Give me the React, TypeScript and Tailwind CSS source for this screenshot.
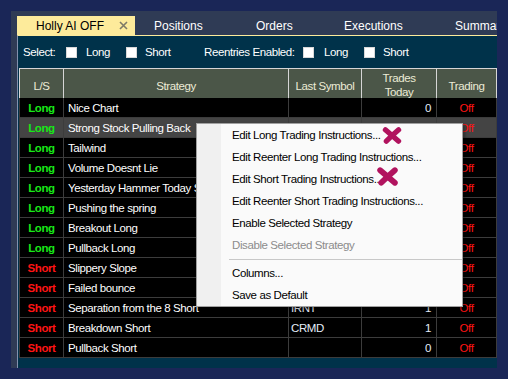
import React from "react";

type Row = { ls: "Long" | "Short"; name: string; sym: string; trades: string; sel?: boolean };

const rows: Row[] = [
  { ls: "Long", name: "Nice Chart", sym: "", trades: "0" },
  { ls: "Long", name: "Strong Stock Pulling Back", sym: "", trades: "0", sel: true },
  { ls: "Long", name: "Tailwind", sym: "", trades: "0" },
  { ls: "Long", name: "Volume Doesnt Lie", sym: "", trades: "0" },
  { ls: "Long", name: "Yesterday Hammer Today Strong", sym: "", trades: "0" },
  { ls: "Long", name: "Pushing the spring", sym: "", trades: "0" },
  { ls: "Long", name: "Breakout Long", sym: "", trades: "0" },
  { ls: "Long", name: "Pullback Long", sym: "", trades: "0" },
  { ls: "Short", name: "Slippery Slope", sym: "", trades: "0" },
  { ls: "Short", name: "Failed bounce", sym: "", trades: "0" },
  { ls: "Short", name: "Separation from the 8 Short", sym: "IRNT", trades: "1" },
  { ls: "Short", name: "Breakdown Short", sym: "CRMD", trades: "1" },
  { ls: "Short", name: "Pullback Short", sym: "", trades: "0" },
];

const Check = () => <div className="w-[11px] h-[11px] bg-white border border-[#d8d8d8] shrink-0" />;

const PinkX = ({ w, h }: { w: number; h: number }) => (
  <svg width={w} height={h} viewBox="0 0 20 18" className="block">
    <path d="M3 3 Q10 9 17 15" stroke="#b1135e" strokeWidth="5.5" strokeLinecap="round" fill="none" />
    <path d="M17 3 Q10 9 4 15" stroke="#b1135e" strokeWidth="5.5" strokeLinecap="round" fill="none" />
  </svg>
);

export default function App() {
  const font = "font-['Liberation_Sans',Arial,sans-serif]";
  return (
    <div className={`w-[508px] h-[379px] bg-[#1a2657] relative overflow-hidden pt-[11px] pl-[11px] ${font}`}>
      <div className="w-[486px] h-[357px] bg-[#2f3b55] flex flex-col">
        {/* Tab bar */}
        <div className="h-[24px] flex items-end pl-[6px] shrink-0 overflow-hidden text-[12px] whitespace-nowrap">
          <div className="w-[118px] h-[19px] bg-[#fdeb9b] flex items-center pl-[19px] pr-[7px] text-black shrink-0">
            <span>Holly AI OFF</span>
            <svg width="9" height="9" viewBox="0 0 9 9" className="ml-auto">
              <path d="M1 1 L8 8 M8 1 L1 8" stroke="#7d7a68" strokeWidth="1.6" />
            </svg>
          </div>
          <div className="w-[102px] h-[19px] flex items-center pl-[19px] text-white shrink-0">Positions</div>
          <div className="w-[88px] h-[19px] flex items-center pl-[19px] text-white shrink-0">Orders</div>
          <div className="w-[111px] h-[19px] flex items-center pl-[19px] text-white shrink-0">Executions</div>
          <div className="w-[60px] h-[19px] flex items-center pl-[19px] text-white shrink-0">Summary</div>
        </div>
        {/* Body */}
        <div className="flex flex-1 min-h-0">
          <div className="w-[6px] shrink-0" />
          <div className="flex-1 bg-[#00324a] border-t border-t-[#fdeb9b] border-l border-l-[#8391ad] flex flex-col">
            {/* Select row */}
            <div className="h-[32px] flex items-center pl-[5px] pt-[1px] text-[11.5px] tracking-[-0.4px] text-white whitespace-nowrap shrink-0">
              <div className="w-[43px] shrink-0">Select:</div>
              <Check />
              <div className="w-[49px] pl-[9px] shrink-0">Long</div>
              <Check />
              <div className="w-[67px] pl-[8px] shrink-0">Short</div>
              <div className="w-[99px] shrink-0">Reentries Enabled:</div>
              <Check />
              <div className="w-[50px] pl-[10px] shrink-0">Long</div>
              <Check />
              <div className="pl-[8px] shrink-0">Short</div>
            </div>
            {/* Grid */}
            <div className="ml-[1px] text-[11.5px] tracking-[-0.4px] whitespace-nowrap">
              <div className="grid grid-cols-[44px_225px_73px_75px_61px] h-[30px] bg-[#4b5648] text-[#ecebd6] border-t border-t-[#d6d6d6] text-center leading-[14px]">
                <div className="border-l border-[#d6d6d6] flex items-center justify-center pt-[3px]">L/S</div>
                <div className="border-l border-[#d6d6d6] flex items-center justify-center pt-[3px]">Strategy</div>
                <div className="border-l border-[#d6d6d6] flex items-center justify-center pt-[3px]">Last Symbol</div>
                <div className="border-l border-[#d6d6d6] flex items-center justify-center pt-[2px]">
                  Trades
                  <br />
                  Today
                </div>
                <div className="border-l border-r border-[#d6d6d6] flex items-center justify-center pt-[3px]">Trading</div>
              </div>
              {rows.map((r, i) => (
                <div
                  key={i}
                  className={`grid grid-cols-[44px_225px_73px_75px_61px] h-[20px] ${r.sel ? "bg-[#444444]" : "bg-black"}`}
                >
                  <div
                    className={`border-l border-b border-[#3c3c3c] flex items-center justify-center pt-[2px] font-bold ${
                      r.ls === "Long" ? "text-[#18e818]" : "text-[#ff1414]"
                    }`}
                  >
                    {r.ls}
                  </div>
                  <div className="border-l border-b border-[#3c3c3c] flex items-center pl-[4px] pt-[2px] text-white overflow-hidden">
                    {r.name}
                  </div>
                  <div className="border-l border-b border-[#3c3c3c] flex items-center pl-[2px] pt-[2px] text-[#e4ecf8]">
                    {r.sym}
                  </div>
                  <div className="border-l border-b border-[#3c3c3c] flex items-center justify-end pr-[5px] pt-[2px] text-[#e4ecf8]">
                    {r.trades}
                  </div>
                  <div className="border-l border-r border-b border-[#3c3c3c] flex items-center justify-center pt-[2px] text-[#ff1414]">
                    Off
                  </div>
                </div>
              ))}
            </div>
          </div>
        </div>
      </div>

      {/* Context menu */}
      <div className="absolute left-[196px] top-[123px] w-[267px] h-[184px] bg-[#fafafa] border border-[#a0a0a0] flex text-[11.5px] tracking-[-0.4px] text-black whitespace-nowrap shadow-[2px_2px_3px_rgba(0,0,0,0.35)]">
        <div className="w-[24px] bg-[#f0f0f0] shrink-0" />
        <div className="flex-1 flex flex-col">
          <div className="h-[22px] flex items-center pl-[11px] pt-[1px]">Edit Long Trading Instructions...</div>
          <div className="h-[22px] flex items-center pl-[11px] pt-[1px]">Edit Reenter Long Trading Instructions...</div>
          <div className="h-[22px] flex items-center pl-[11px] pt-[1px]">Edit Short Trading Instructions...</div>
          <div className="h-[22px] flex items-center pl-[11px] pt-[1px]">Edit Reenter Short Trading Instructions...</div>
          <div className="h-[22px] flex items-center pl-[11px] pt-[1px]">Enable Selected Strategy</div>
          <div className="h-[22px] flex items-center pl-[11px] pt-[1px] text-[#8c8c8c]">Disable Selected Strategy</div>
          <div className="h-[6px] flex items-center pl-[8px]">
            <div className="h-[1px] w-full bg-[#c8c8c8]" />
          </div>
          <div className="h-[22px] flex items-center pl-[11px] pt-[1px]">Columns...</div>
          <div className="h-[22px] flex items-center pl-[11px] pt-[1px]">Save as Default</div>
        </div>
        <div className="absolute left-[185px] top-[3px]">
          <PinkX w={20} h={17} />
        </div>
        <div className="absolute left-[180px] top-[43px]">
          <PinkX w={21} h={19} />
        </div>
      </div>
    </div>
  );
}
